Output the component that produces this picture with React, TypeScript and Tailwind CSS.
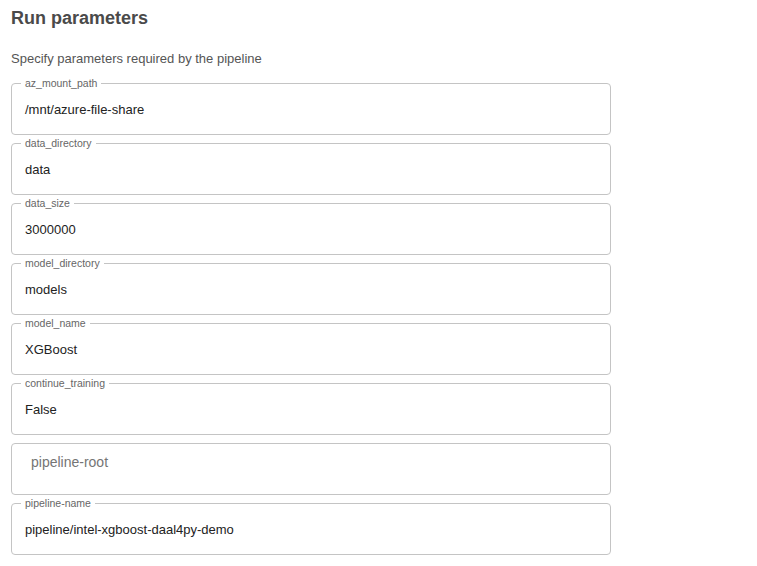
import React from "react";

const fields: { label?: string; value: string; placeholder?: boolean }[] = [
  { label: "az_mount_path", value: "/mnt/azure-file-share" },
  { label: "data_directory", value: "data" },
  { label: "data_size", value: "3000000" },
  { label: "model_directory", value: "models" },
  { label: "model_name", value: "XGBoost" },
  { label: "continue_training", value: "False" },
  { value: "pipeline-root", placeholder: true },
  { label: "pipeline-name", value: "pipeline/intel-xgboost-daal4py-demo" },
];

export default function App() {
  return (
    <div
      className="min-h-[566px] bg-white pt-[7px] px-[11px]"
      style={{ fontFamily: '"Liberation Sans", Arial, sans-serif' }}
    >
      <h2 className="text-[18px] leading-[22px] font-bold text-[#4a4a4a]">Run parameters</h2>
      <p className="mt-[22px] text-[13px] leading-[16px] text-[#555]">
        Specify parameters required by the pipeline
      </p>
      <div className="mt-[16px] flex flex-col gap-[8px]">
        {fields.map((f, i) => (
          <div
            key={i}
            className="relative w-[600px] h-[52px] border border-[#c4c4c4] rounded-[4px]"
          >
            {f.label && (
              <span className="absolute left-[9px] top-[-7px] px-[4px] bg-white text-[10.5px] leading-[12px] text-[#666]">
                {f.label}
              </span>
            )}
            {f.placeholder ? (
              <div className="pl-[19px] pt-[10px] text-[14px] leading-[16px] text-[#757575]">
                {f.value}
              </div>
            ) : (
              <div className="pl-[13px] pt-[18px] text-[13px] leading-[16px] text-[#222]">
                {f.value}
              </div>
            )}
          </div>
        ))}
      </div>
    </div>
  );
}
